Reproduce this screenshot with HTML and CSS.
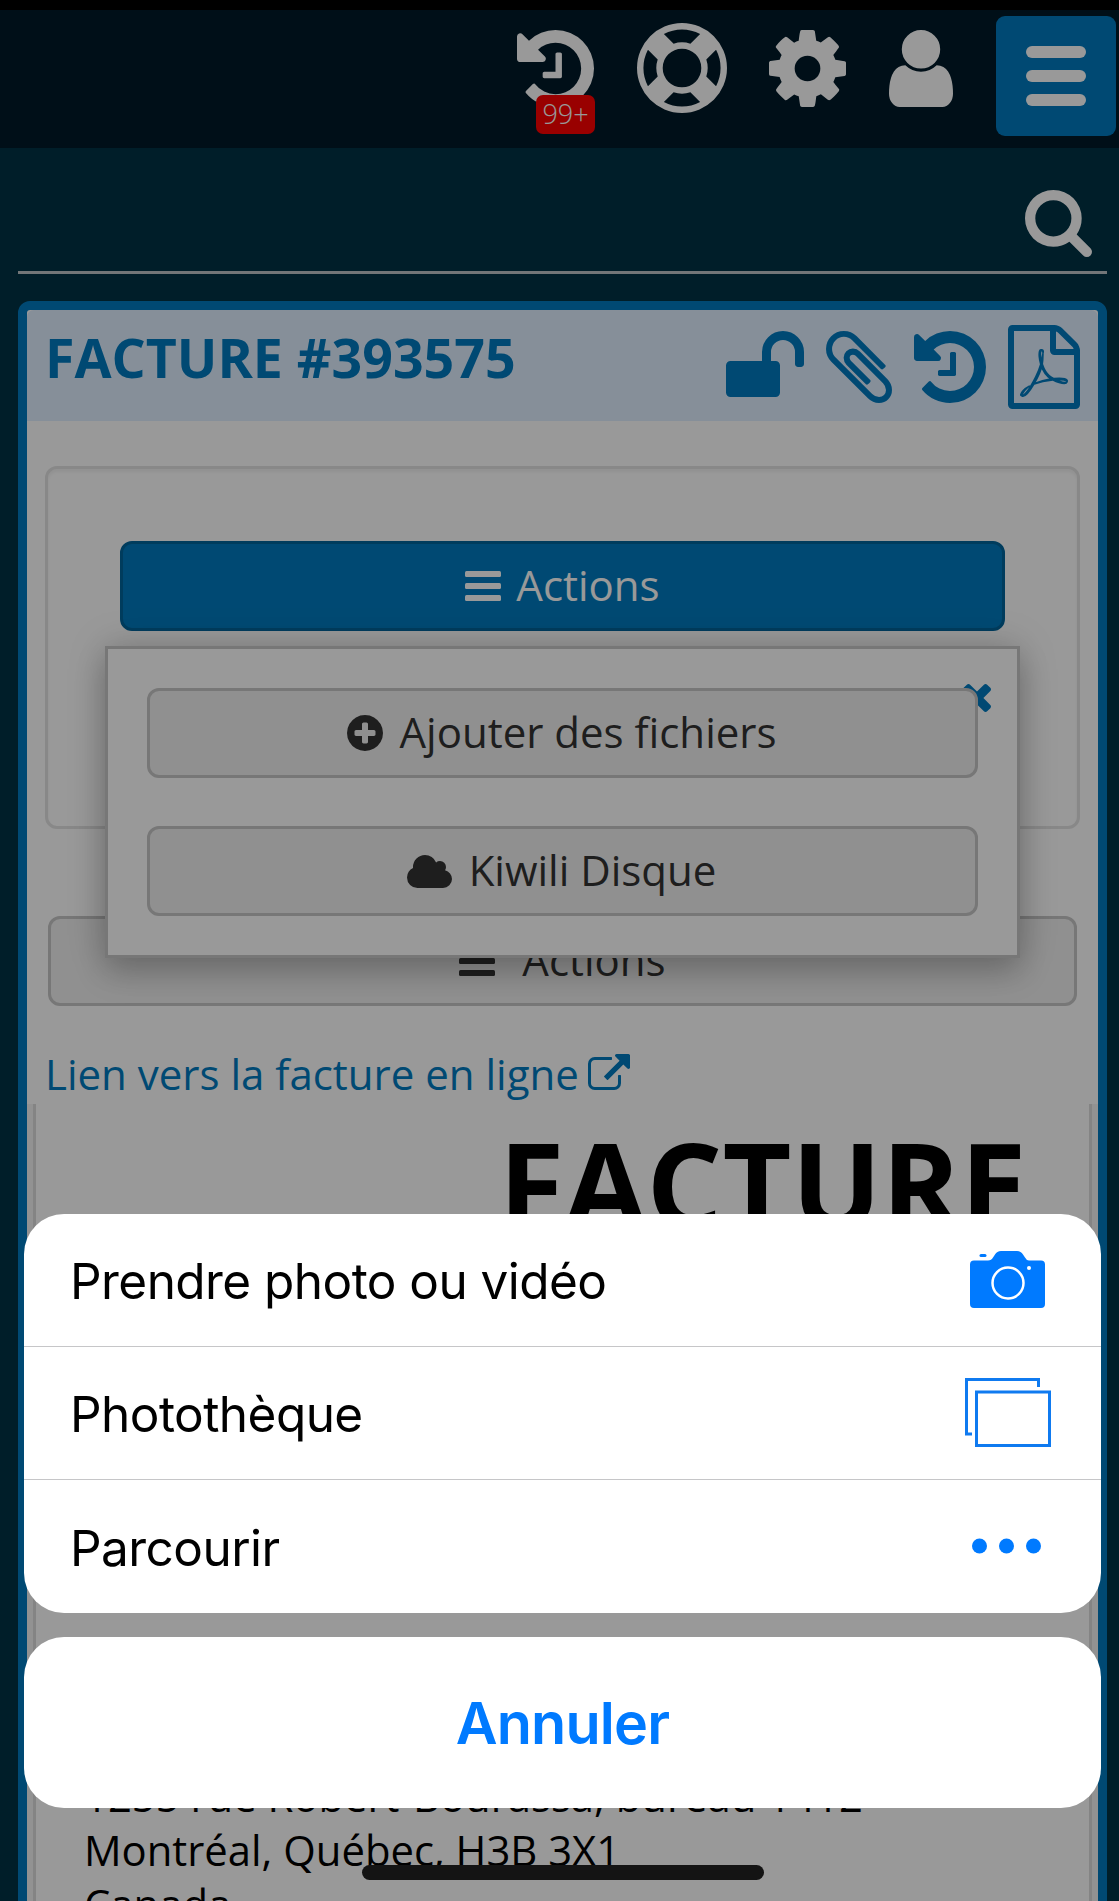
FILE: index.html
```html
<!DOCTYPE html>
<html lang="fr">
<head>
  <meta charset="UTF-8">
  <meta name="viewport" content="width=device-width, initial-scale=1.0">
  <title>Facture #393575</title>
  <link rel="stylesheet" href="styles.css">
</head>
<body>

  <div class="screen">
    <div class="topbar">
      <div class="history">
        <svg class="icon-77" viewBox="128 128 1536 1536"><path d="M1664 896q0 156-61 298t-164 245-245 164-298 61q-172 0-327-72.5t-264-204.5q-7-10-6.5-22.5t8.5-20.5l137-138q10-9 25-9 16 2 23 12 73 95 179 147t225 52q104 0 198.5-40.5t163.5-109.5 109.5-163.5 40.5-198.5-40.5-198.5-109.5-163.5-163.5-109.5-198.5-40.5q-98 0-188 35.5t-160 101.5l137 138q31 30 14 69-17 40-59 40h-448q-26 0-45-19t-19-45v-448q0-42 40-59 39-17 69 14l130 129q107-101 244.5-156.5t284.5-55.5q156 0 298 61t245 164 164 245 61 298zm-640-288v448q0 14-9 23t-23 9h-320q-14 0-23-9t-9-23v-64q0-14 9-23t23-9h224v-352q0-14 9-23t23-9h64q14 0 23 9t9 23z"/></svg>
        <span class="badge">99+</span>
      </div>
      <svg class="icon-90" viewBox="0 0 1792 1792"><path d="M896 0q182 0 348 71t286 191 191 286 71 348-71 348-191 286-286 191-348 71-348-71-286-191-191-286-71-348 71-348 191-286 286-191 348-71zm0 128q-190 0-361 90l194 194q82-28 167-28t167 28l194-194q-171-90-361-90zm-678 1129l194-194q-28-82-28-167t28-167l-194-194q-90 171-90 361t90 361zm678 407q190 0 361-90l-194-194q-82 28-167 28t-167-28l-194 194q171 90 361 90zm0-384q159 0 271.5-112.5t112.5-271.5-112.5-271.5-271.5-112.5-271.5 112.5-112.5 271.5 112.5 271.5 271.5 112.5zm484-217l194 194q90-171 90-361t-90-361l-194 194q28 82 28 167t-28 167z"/></svg>
      <svg class="icon-77" viewBox="128 128 1536 1536"><path d="M1152 896q0-106-75-181t-181-75-181 75-75 181 75 181 181 75 181-75 75-181zm512-109v222q0 12-8 23t-20 13l-185 28q-19 54-39 91 35 50 107 138 10 12 10 25t-9 23q-27 37-99 108t-94 71q-12 0-26-9l-138-108q-44 23-91 38-16 136-29 186-7 28-36 28h-222q-14 0-24.5-8.5t-11.5-21.5l-28-184q-49-16-90-37l-141 107q-10 9-25 9-14 0-25-11-126-114-165-168-7-10-7-23 0-12 8-23 15-21 51-66.5t54-70.5q-27-50-41-99l-183-27q-13-2-21-12.5t-8-23.5v-222q0-12 8-23t19-13l186-28q14-46 39-92-40-57-107-138-10-12-10-24 0-10 9-23 26-36 98.5-107.5t94.5-71.5q13 0 26 10l138 107q44-23 91-38 16-136 29-186 7-28 36-28h222q14 0 24.5 8.5t11.5 21.5l28 184q49 16 90 37l142-107q9-9 24-9 13 0 25 10 129 119 165 170 7 8 7 22 0 12-8 23-15 21-51 66.5t-54 70.5q26 50 41 98l183 28q13 2 21 12.5t8 23.5z"/></svg>
      <svg class="icon-user" viewBox="256 128 1280 1536"><path d="M1536 1399q0 109-62.5 187t-150.5 78h-854q-88 0-150.5-78t-62.5-187q0-85 8.5-160.5t31.5-152 58.5-131 94-89 134.5-34.5q131 128 313 128t313-128q76 0 134.5 34.5t94 89 58.5 131 31.5 152 8.5 160.5zm-256-887q0 159-112.5 271.5t-271.5 112.5-271.5-112.5-112.5-271.5 112.5-271.5 271.5-112.5 271.5 112.5 112.5 271.5z"/></svg>
      <div class="menu-btn"><span></span><span></span><span></span></div>
    </div>

    <div class="search">
      <svg viewBox="64 128 1664 1664"><path d="M1216 832q0-185-131.5-316.5t-316.5-131.5-316.5 131.5-131.5 316.5 131.5 316.5 316.5 131.5 316.5-131.5 131.5-316.5zm512 832q0 52-38 90t-90 38q-54 0-90-38l-343-342q-179 124-399 124-143 0-273.5-55.5t-225-150-150-225-55.5-273.5 55.5-273.5 150-225 225-150 273.5-55.5 273.5 55.5 225 150 150 225 55.5 273.5q0 220-124 399l343 343q37 37 37 90z"/></svg>
    </div>

    <div class="card">
      <div class="card-header">
        <h1>FACTURE #393575</h1>
        <div class="card-icons">
          <svg class="icon-unlock" viewBox="64 128 1664 1408"><path d="M1728 576v256q0 26-19 45t-45 19h-64q-26 0-45-19t-19-45v-256q0-106-75-181t-181-75-181 75-75 181v192h96q40 0 68 28t28 68v576q0 40-28 68t-68 28h-960q-40 0-68-28t-28-68v-576q0-40 28-68t68-28h672v-192q0-185 131.5-316.5t316.5-131.5 316.5 131.5 131.5 316.5z"/></svg>
          <svg class="icon-clip" viewBox="196 132 1400 1528"><path d="M1596 1385q0 117-79 196t-196 79q-135 0-235-100l-777-776q-113-115-113-271 0-159 110-270t269-111q158 0 273 113l605 606q10 10 10 22 0 16-30.5 46.5t-46.5 30.5q-13 0-23-10l-606-607q-79-77-181-77-106 0-179 75t-73 181q0 105 76 181l776 777q63 63 145 63 64 0 106-42t42-106q0-82-63-145l-581-581q-26-24-60-24-29 0-48 19t-19 48q0 32 25 59l410 410q10 10 10 22 0 16-31 47t-47 31q-12 0-22-10l-410-410q-63-61-63-149 0-82 57-139t139-57q88 0 149 63l581 581q100 98 100 235z"/></svg>
          <svg class="icon-72" viewBox="128 128 1536 1536"><path d="M1664 896q0 156-61 298t-164 245-245 164-298 61q-172 0-327-72.5t-264-204.5q-7-10-6.5-22.5t8.5-20.5l137-138q10-9 25-9 16 2 23 12 73 95 179 147t225 52q104 0 198.5-40.5t163.5-109.5 109.5-163.5 40.5-198.5-40.5-198.5-109.5-163.5-163.5-109.5-198.5-40.5q-98 0-188 35.5t-160 101.5l137 138q31 30 14 69-17 40-59 40h-448q-26 0-45-19t-19-45v-448q0-42 40-59 39-17 69 14l130 129q107-101 244.5-156.5t284.5-55.5q156 0 298 61t245 164 164 245 61 298zm-640-288v448q0 14-9 23t-23 9h-320q-14 0-23-9t-9-23v-64q0-14 9-23t23-9h224v-352q0-14 9-23t23-9h64q14 0 23 9t9 23z"/></svg>
          <svg class="icon-pdf" viewBox="128 0 1536 1792"><path d="M1596 380q28 28 48 76t20 88v1152q0 40-28 68t-68 28h-1344q-40 0-68-28t-28-68v-1600q0-40 28-68t68-28h896q40 0 88 20t76 48zm-444-244v376h376q-10-29-22-41l-313-313q-12-12-41-22zm384 1528v-1024h-416q-40 0-68-28t-28-68v-416h-768v1536h1280zm-514-593q33 26 84 56 59-7 117-7 147 0 177 49 16 22 2 52 0 1-1 2l-2 2v1q-6 38-71 38-48 0-115-20t-130-53q-221 24-392 83-153 262-242 262-15 0-28-7l-24-12q-1-1-6-5-10-10-6-36 9-40 56-91.5t132-96.5q14-9 23 6 2 2 2 4 52-85 107-197 68-136 104-262-24-82-30.5-159.5t6.5-127.5q11-40 42-40h22q23 0 35 15 18 21 9 68-2 6-4 8 1 3 1 8v30q-2 123-14 192 55 164 146 238zm-576 411q52-24 137-158-51 40-87.5 84t-49.5 74zm398-920q-15 42-2 132 1-7 7-44 0-3 7-43 1-4 4-8-1-1-1-2-1-2-1-3-1-22-13-36 0 1-1 2v2zm-124 661q135-54 284-81-2-1-13-9.5t-16-13.5q-76-67-127-176-27 86-83 197-30 56-45 83zm646-16q-24-24-140-24 76 28 124 28 14 0 18-1 0-1-2-3z"/></svg>
        </div>
      </div>

      <div class="well">
        <div class="btn btn-primary">
          <svg class="icon-bars" viewBox="0 0 36 30"><rect width="36" height="6" rx="1.5"/><rect y="12" width="36" height="6" rx="1.5"/><rect y="24" width="36" height="6" rx="1.5"/></svg>
          <span>Actions</span>
        </div>
        <div class="popover">
          <svg class="close" viewBox="302 366 1188 1188"><path d="M1490 1322q0 40-28 68l-136 136q-28 28-68 28t-68-28l-294-294-294 294q-28 28-68 28t-68-28l-136-136q-28-28-28-68t28-68l294-294-294-294q-28-28-28-68t28-68l136-136q28-28 68-28t68 28l294 294 294-294q28-28 68-28t68 28l136 136q28 28 28 68t-28 68l-294 294 294 294q28 28 28 68z"/></svg>
          <div class="btn">
            <svg class="icon-plus" viewBox="128 128 1536 1536"><path d="M1344 960v-128q0-26-19-45t-45-19h-256v-256q0-26-19-45t-45-19h-128q-26 0-45 19t-19 45v256h-256q-26 0-45 19t-19 45v128q0 26 19 45t45 19h256v256q0 26 19 45t45 19h128q26 0 45-19t19-45v-256h256q26 0 45-19t19-45zm320-64q0 209-103 385.5t-279.5 279.5-385.5 103-385.5-103-279.5-279.5-103-385.5 103-385.5 279.5-279.5 385.5-103 385.5 103 279.5 279.5 103 385.5z"/></svg>
            <span>Ajouter des fichiers</span>
          </div>
          <div class="btn">
            <svg class="icon-cloud" viewBox="64 128 1920 1408"><path d="M1984 1152q0 159-112.5 271.5t-271.5 112.5h-1088q-185 0-316.5-131.5t-131.5-316.5q0-132 71-241.5t187-163.5q-2-28-2-43 0-212 150-362t362-150q158 0 286.5 88t187.5 230q70-62 166-62 106 0 181 75t75 181q0 75-41 138 129 30 213 134.5t84 239.5z"/></svg>
            <span>Kiwili Disque</span>
          </div>
        </div>
      </div>

      <div class="btn btn-wide">
        <svg class="icon-bars" viewBox="0 0 36 30"><rect width="36" height="6" rx="1.5"/><rect y="12" width="36" height="6" rx="1.5"/><rect y="24" width="36" height="6" rx="1.5"/></svg>
        <span>Actions</span>
      </div>

      <a class="online-link">
        <span>Lien vers la facture en ligne</span>
        <svg viewBox="64 61 1792 1536"><path d="M1472 989v320q0 119-84.5 203.5t-203.5 84.5h-832q-119 0-203.5-84.5t-84.5-203.5v-832q0-119 84.5-203.5t203.5-84.5h704q14 0 23 9t9 23v64q0 14-9 23t-23 9h-704q-66 0-113 47t-47 113v832q0 66 47 113t113 47h832q66 0 113-47t47-113v-320q0-14 9-23t23-9h64q14 0 23 9t9 23zm384-864v512q0 26-19 45t-45 19-45-19l-176-176-652 652q-10 10-23 10t-23-10l-114-114q-10-10-10-23t10-23l652-652-176-176q-19-19-19-45t19-45 45-19h512q26 0 45 19t19 45z"/></svg>
      </a>

      <div class="invoice-wrap">
        <div class="invoice">
          <h2>FACTURE</h2>
          <address>
            1255 rue Robert-Bourassa, bureau 1412<br>
            Montréal, Québec, H3B 3X1<br>
            Canada
          </address>
        </div>
      </div>
    </div>

    <div class="dim"></div>

    <div class="sheet">
      <div class="sheet-group">
        <div class="sheet-row">
          <span>Prendre photo ou vidéo</span>
          <svg width="86" height="57" viewBox="0 0 86 57">
            <path fill="#007aff" d="M9 9.500H23q3.500 0 5-3l2-3q2-3.500 6-3.500h16q4 0 6 3.500l2 3q1.500 3 4 3h12q4 0 4 4V53q0 4-4 4h-67q-4 0-4-4V13.500q0-4 4-4z"/>
            <rect x="14.500" y="3" width="7" height="3" rx="1.500" fill="#007aff"/>
            <circle cx="43" cy="32" r="15.500" fill="none" stroke="#fff" stroke-width="2.500"/>
            <circle cx="64" cy="17" r="2" fill="#fff"/>
          </svg>
        </div>
        <div class="sheet-row">
          <span>Photothèque</span>
          <svg width="86" height="69" viewBox="0 0 86 69" fill="none" stroke="#0f7af0" stroke-width="3">
            <path d="M7 56H1.500V1.500H73.500V9"/>
            <rect x="11.500" y="14" width="73" height="53.500"/>
          </svg>
        </div>
        <div class="sheet-row">
          <span>Parcourir</span>
          <svg width="86" height="16" viewBox="0 0 86 16" fill="#007aff">
            <circle cx="14.500" cy="8" r="7.500"/><circle cx="41.500" cy="8" r="7.500"/><circle cx="68.500" cy="8" r="7.500"/>
          </svg>
        </div>
      </div>
      <div class="sheet-cancel">Annuler</div>
    </div>
    <div class="home-indicator"></div>
  </div>

</body>
</html>
```
FILE: styles.css
```css
body {
  margin: 0;
  background-color: #000;
  font-family: 'Open Sans', 'Noto Sans', sans-serif;
}
svg {
  display: block;
  flex: none;
}
.screen {
  position: relative;
  box-sizing: border-box;
  width: 1119px;
  height: 1901px;
  overflow: hidden;
  border-top: 10px solid #000;
  background-color: #003245;
}
.topbar {
  display: flex;
  justify-content: flex-end;
  align-items: center;
  gap: 43px;
  box-sizing: border-box;
  height: 138px;
  padding: 0 3px 22px 0;
  background-color: #001928;
  fill: #fff;
}
.icon-77 {
  width: 77px;
  height: 77px;
}
.icon-90 {
  width: 90px;
  height: 90px;
  margin-right: -1px;
}
.icon-user {
  width: 64px;
  height: 77px;
}
.history {
  position: relative;
}
.badge {
  position: absolute;
  left: 19px;
  top: 65px;
  width: 59px;
  height: 39px;
  border-radius: 7px;
  background-color: #f00;
  color: #fff;
  font-size: 27px;
  font-weight: 300;
  line-height: 38px;
  text-align: center;
}
.menu-btn {
  display: flex;
  flex-direction: column;
  justify-content: center;
  align-items: center;
  gap: 12px;
  width: 120px;
  height: 120px;
  margin-top: 16px;
  border-radius: 9px;
  background-color: #007bc0;
}
.menu-btn span {
  width: 60px;
  height: 12px;
  border-radius: 6px;
  background-color: #fff;
}
.search {
  display: flex;
  justify-content: flex-end;
  box-sizing: border-box;
  height: 126px;
  margin: 0 12px 27px 18px;
  padding: 42px 15px 0 0;
  border-bottom: 3px solid #bfc5c8;
  fill: #fff;
}
.search svg {
  width: 67px;
  height: 67px;
}
.card {
  box-sizing: border-box;
  height: 1700px;
  margin: 0 12px 0 18px;
  border: 9px solid #007bc0;
  border-radius: 12px;
  background-color: #fff;
}
.card-header {
  display: flex;
  justify-content: space-between;
  align-items: flex-start;
  box-sizing: border-box;
  height: 111px;
  padding: 15px 18px 0 18px;
  border-radius: 7px 7px 0 0;
  background-color: #dfeeff;
}
.card-header h1 {
  margin: 6px 0 0;
  color: #007bc0;
  font-size: 53.700px;
  line-height: 54px;
}
.card-icons {
  display: flex;
  align-items: flex-start;
  gap: 22px;
  fill: #007bc0;
}
.icon-unlock {
  width: 78px;
  height: 66px;
  margin-top: 6px;
}
.icon-clip {
  width: 66px;
  height: 72px;
  margin-top: 6px;
}
.icon-72 {
  width: 72px;
  height: 72px;
  margin-top: 6px;
}
.icon-pdf {
  width: 72px;
  height: 84px;
}
.well {
  position: relative;
  box-sizing: border-box;
  height: 363px;
  margin: 45px 18px 0;
  padding: 72px;
  border: 3px solid #e3e3e3;
  border-radius: 12px;
  box-shadow: inset 0 3px 3px rgba(0, 0, 0, 0.05);
}
.btn {
  display: flex;
  justify-content: center;
  align-items: center;
  gap: 17px;
  box-sizing: border-box;
  height: 90px;
  border: 3px solid #c6c6c6;
  border-radius: 12px;
  background-color: #f0f0f0;
  color: #333;
  fill: #333;
  font-size: 42px;
}
.btn span {
  line-height: 82px;
  margin-top: -2px;
}
.btn-primary {
  gap: 15px;
  border-color: #00659c;
  background-color: #007bc0;
  color: #fff;
  fill: #fff;
}
.btn-wide {
  gap: 27px;
  margin: 87px 21px 0;
}
.icon-bars {
  width: 36px;
  height: 30px;
}
.icon-plus {
  width: 36px;
  height: 36px;
}
.icon-cloud {
  width: 45px;
  height: 33px;
}
/* Menu ouvert sous le bouton Actions */
.popover {
  position: absolute;
  top: 177px;
  left: 57px;
  right: 57px;
  display: flex;
  flex-direction: column;
  gap: 48px;
  padding: 39px;
  border: 3px solid #c6c6c6;
  background-color: #fff;
  box-shadow: 0 15px 30px rgba(0, 0, 0, 0.18), 0 0 36px rgba(0, 0, 0, 0.18);
}
.popover .btn {
  position: relative;
  padding-right: 2px;
}
.close {
  position: absolute;
  top: 35px;
  right: 26px;
  width: 28px;
  height: 28px;
  fill: #007bc0;
}
.online-link {
  display: flex;
  align-items: center;
  gap: 10px;
  height: 57px;
  margin: 41px 0 0 18px;
  color: #007bc0;
  fill: #007bc0;
  font-size: 42px;
}
.online-link span {
  margin-top: -4px;
}
.online-link svg {
  width: 42px;
  height: 36px;
  margin: 0 0 8px -1px;
}
.invoice-wrap {
  height: 900px;
  padding: 0 6px;
  background-color: #f4f4f4;
}
.invoice {
  box-sizing: border-box;
  height: 100%;
  padding: 4px 62px 0 48px;
  border: solid #dcdcdc;
  border-width: 0 3px;
  background-color: #fff;
}
.invoice h2 {
  margin: 0;
  color: #000;
  font-size: 119.200px;
  line-height: 150px;
  text-align: right;
}
.invoice address {
  margin-top: 511px;
  color: #000;
  font-size: 41.800px;
  font-style: normal;
  line-height: 54px;
}
.dim {
  position: absolute;
  top: 0;
  left: 0;
  width: 100%;
  height: 100%;
  background-color: rgba(0, 0, 0, 0.4);
}
.sheet {
  position: absolute;
  top: 1204px;
  left: 24px;
  width: 1077px;
  font-family: Inter, 'Liberation Sans', sans-serif;
}
.sheet-group {
  height: 399px;
  border-radius: 40px;
  background-color: #fff;
}
.sheet-row {
  display: flex;
  justify-content: space-between;
  align-items: center;
  box-sizing: border-box;
  height: 133px;
  padding: 0 50px 0 46px;
  border-bottom: 1px solid #c6c6c8;
  font-size: 49.500px;
  letter-spacing: -0.550px;
  color: #000;
}
.sheet-row span {
  margin-top: 2px;
}
.sheet-row svg {
  margin-bottom: 2px;
}
.sheet-row:last-child {
  border-bottom: none;
}
.sheet-cancel {
  height: 171px;
  margin-top: 24px;
  border-radius: 40px;
  background-color: #fff;
  color: #007aff;
  font-size: 57.500px;
  font-weight: 600;
  letter-spacing: -0.800px;
  line-height: 173px;
  text-align: center;
}
.home-indicator {
  position: absolute;
  top: 1855px;
  left: 362px;
  width: 402px;
  height: 15px;
  border-radius: 8px;
  background-color: #141414;
}
```
